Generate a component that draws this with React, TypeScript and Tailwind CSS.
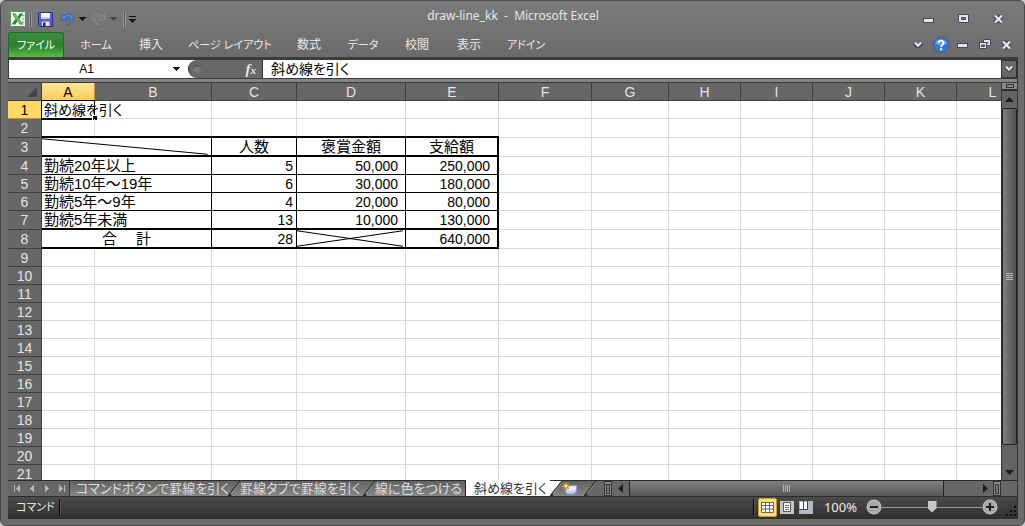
import React, { useState } from 'react';
import clsx from 'clsx';

type Cell = {
  text?: string;
  span?: number;
  className?: string;
  cross?: 'single' | 'double';
};

const COLUMNS = [
  { name: 'A', width: 'w-[53px]' },
  { name: 'B', width: 'w-[117px]' },
  { name: 'C', width: 'w-[85px]' },
  { name: 'D', width: 'w-[109px]' },
  { name: 'E', width: 'w-[93px]' },
  { name: 'F', width: 'w-[93px]' },
  { name: 'G', width: 'w-[77px]' },
  { name: 'H', width: 'w-[72px]' },
  { name: 'I', width: 'w-[72px]' },
  { name: 'J', width: 'w-[72px]' },
  { name: 'K', width: 'w-[72px]' },
  { name: 'L', width: 'w-[72px]' },
];

const LABEL = 'pl-0.5 text-left text-[15px]';
const HEAD = 'text-center text-[15px]';
const COUNT = 'pr-[3px] text-right text-[14px]';
const MONEY = 'pr-[7px] text-right text-[14px]';

const DATA: Record<number, Cell[]> = {
  3: [
    { span: 2, cross: 'single' },
    { text: '人数', className: HEAD },
    { text: '褒賞金額', className: HEAD },
    { text: '支給額', className: HEAD },
  ],
  4: [
    { text: '勤続20年以上', span: 2, className: LABEL },
    { text: '5', className: COUNT },
    { text: '50,000', className: MONEY },
    { text: '250,000', className: MONEY },
  ],
  5: [
    { text: '勤続10年～19年', span: 2, className: LABEL },
    { text: '6', className: COUNT },
    { text: '30,000', className: MONEY },
    { text: '180,000', className: MONEY },
  ],
  6: [
    { text: '勤続5年～9年', span: 2, className: LABEL },
    { text: '4', className: COUNT },
    { text: '20,000', className: MONEY },
    { text: '80,000', className: MONEY },
  ],
  7: [
    { text: '勤続5年未満', span: 2, className: LABEL },
    { text: '13', className: COUNT },
    { text: '10,000', className: MONEY },
    { text: '130,000', className: MONEY },
  ],
  8: [
    { text: '合　 計', span: 2, className: HEAD },
    { text: '28', className: COUNT },
    { cross: 'double' },
    { text: '640,000', className: MONEY },
  ],
};

const TALL_ROWS = [2, 3, 7, 8];
const THICK_ROWS = [3, 7, 8];

const RIBBON_TABS = [
  { name: 'ホーム', width: 'w-16 text-[11px]' },
  { name: '挿入', width: 'w-[46px]' },
  { name: 'ページ レイアウト', width: 'w-28 text-[11px]' },
  { name: '数式', width: 'w-[46px]' },
  { name: 'データ', width: 'w-[62px] text-[11px]' },
  { name: '校閲', width: 'w-[46px]' },
  { name: '表示', width: 'w-[58px]' },
  { name: 'アドイン', width: 'w-14 text-[11px]' },
];

const Caret = ({ color = '#151515' }: { color?: string }) => (
  <svg width="7" height="4" viewBox="0 0 7 4" shapeRendering="crispEdges">
    <path d="M0 0h7L3.5 4z" fill={color} />
  </svg>
);

const ExcelLogo = () => (
  <svg width="16" height="16" viewBox="0 0 16 16">
    <rect x=".5" y=".5" width="15" height="15" rx="1" fill="#f6fbf4" stroke="#4c9a52" />
    <path d="M11.500 1.500h3v13h-3z" fill="#d9ecd5" />
    <path d="M12 4.500h2.500M12 8h2.500M12 11.500h2.500" stroke="#79b578" />
    <path d="M2 2.500h3.600l2 3.400 2-3.400H13L9.300 8l3.900 5.500H9.600L7.400 10.200 5.200 13.500H1.600L5.600 8z" fill="#2c8434" />
    <path d="M3.300 3.200h1.900l6.400 9.600H9.700z" fill="#8cc66d" />
  </svg>
);

const SaveIcon = () => (
  <svg width="15" height="15" viewBox="0 0 15 15">
    <path d="M.5 1.500q0-1 1-1h12q1 0 1 1v13H2L.5 13z" fill="#5a5ed0" stroke="#2b2f8c" />
    <path d="M3 1h9v6H3z" fill="#f4f6ff" />
    <path d="M3 5h9v2H3z" fill="#c3ccee" />
    <path d="M4 9.500h7.500V14H4z" fill="#e2e5f5" />
    <path d="M5 10.500h2.500V14H5z" fill="#22265e" />
  </svg>
);

const UndoIcon = ({ color, edge, flip }: { color: string; edge: string; flip?: boolean }) => (
  <svg width="13" height="13" viewBox="0 0 13 13">
    <g transform={flip ? 'matrix(-1 0 0 1 13 0)' : undefined}>
      <path d="M.5 1v6h6L4.600 5.200C6 3.300 9.200 3.200 9.600 5.800c.3 2.300-1.400 4.300-3.600 6.200 4-1.300 6.500-4 6.400-7C12.200.6 6.300-.8 2.700 3.200z" fill={color} stroke={edge} strokeWidth=".8" />
    </g>
  </svg>
);

const MinimizeIcon = () => (
  <svg width="12" height="6" viewBox="0 0 12 6">
    <rect x=".5" y=".5" width="10" height="4" fill="#e4e4e4" stroke="#45485c" />
  </svg>
);

const MaximizeIcon = () => (
  <svg width="12" height="10" viewBox="0 0 12 10">
    <path d="M.5.5h10v8H.5z" fill="#e4e4e4" stroke="#45485c" />
    <path d="M3.500 3.500h4v2h-4z" fill="#777" stroke="#45485c" />
  </svg>
);

const CloseIcon = () => (
  <svg width="12" height="10" viewBox="0 0 12 10">
    <path d="M2 1.500l7 7M9 1.500l-7 7" stroke="#45485c" strokeWidth="4.400" />
    <path d="M2 1.500l7 7M9 1.500l-7 7" stroke="#e6e6e6" strokeWidth="2.300" />
  </svg>
);

const RestoreIcon = () => (
  <svg width="12" height="11" viewBox="0 0 12 11">
    <path d="M4.500.5h7v6h-7z" fill="#e4e4e4" stroke="#45485c" />
    <path d="M6.500 3h3v1.500h-3z" fill="#666" />
    <path d="M.5 3.500h7v6h-7z" fill="#e4e4e4" stroke="#45485c" />
    <path d="M2.500 6h3v1.500h-3z" fill="#777" stroke="#45485c" />
  </svg>
);

const Chevron = () => (
  <svg width="10" height="8" viewBox="0 0 10 8">
    <path d="M1.500 2L5 5.300 8.500 2" fill="none" stroke="#444759" strokeWidth="3.800" />
    <path d="M2 1.500L5 4.800 8 1.500" fill="none" stroke="#ececec" strokeWidth="2" />
  </svg>
);

const HelpIcon = () => (
  <svg width="16" height="16" viewBox="0 0 16 16">
    <circle cx="8" cy="8" r="7.500" fill="#3976d2" stroke="#2e62b4" />
    <path d="M2 6.500C3 1 13 1 14 6.500 11 8.500 5 8.500 2 6.500z" fill="#669be6" />
    <path d="M5.500 6.200C5.500 2.800 10.500 2.800 10.500 6c0 1.800-2.400 2-2.400 4" fill="none" stroke="#fff" strokeWidth="1.900" />
    <path d="M7 11.300h2.200v2H7z" fill="#fff" />
  </svg>
);

const NavIcon = ({ flip, bar }: { flip?: boolean; bar?: boolean }) => (
  <svg width="8" height="7" viewBox="0 0 8 7" shapeRendering="crispEdges">
    <g transform={flip ? 'matrix(-1 0 0 1 8 0)' : undefined} fill="#b4b4b4">
      <path d="M6 0v7L2 3.500z" />
      {bar && <path d="M0 0h1v7H0z" />}
    </g>
  </svg>
);

const Slant = ({ left, right }: { left: string; right: string }) => (
  <svg className="h-full w-3 shrink-0" viewBox="0 0 12 16" preserveAspectRatio="none">
    <defs>
      <linearGradient id="tabfill" x1="0" y1="0" x2="0" y2="1">
        <stop offset="0" stopColor="#626262" />
        <stop offset="1" stopColor="#868686" />
      </linearGradient>
    </defs>
    <path d="M0 0h12v16H0z" fill={right} />
    <path d="M0 0h12L2 13 0 16z" fill={left} />
    <path d="M12 0L2 13L0 16h3L2 13z" fill="#2c2c2c" stroke="#2c2c2c" />
    <path d="M12 1.500L3 13.500" stroke="#a5a5a5" strokeWidth=".7" />
  </svg>
);

const NewSheetIcon = () => (
  <svg width="16" height="13" viewBox="0 0 16 13">
    <path d="M3.500 3.500h11v6l-2 1.500v1h-7l-2-2z" fill="#c3d4f0" stroke="#8aa1cc" />
    <path d="M5 4.500h8.500v3L7 9z" fill="#eef3fc" />
    <path d="M4 0v8M0 4h8M1.200 1.200l5.600 5.600M6.800 1.200L1.200 6.800" stroke="#e08a1a" strokeWidth="1.300" />
    <circle cx="4" cy="4" r="1.500" fill="#fff3c2" />
  </svg>
);

const Splitter = () => (
  <div className="flex w-2 shrink-0 items-center justify-center border border-[#333] bg-[#8a8a8a]">
    <div className="h-2.5 w-1 border border-[#333] bg-[#777]" />
  </div>
);

const TitleBar = () => (
  <header className="relative flex h-8 shrink-0 items-center justify-between pt-1.5 pr-2.5 pl-0.5">
    <div className="flex items-center">
      <ExcelLogo />
      <div className="ml-[3px] h-[15px] w-[3px] border-x border-[#999] bg-[#555]" />
      <button aria-label="上書き保存" className="ml-1.5">
        <SaveIcon />
      </button>
      <button aria-label="元に戻す" className="ml-2 flex items-center gap-[5px]">
        <UndoIcon color="#4b8ae0" edge="#2b5aa8" />
        <Caret />
      </button>
      <button aria-label="やり直し" className="ml-1.5 flex items-center gap-[5px]">
        <UndoIcon color="#7a7a7a" edge="#919191" flip />
        <Caret color="#454545" />
      </button>
      <div className="ml-1.5 h-[15px] w-[3px] border-x border-[#999] bg-[#555]" />
      <button aria-label="クイック アクセス ツール バーのカスタマイズ" className="ml-[3px] flex flex-col gap-0.5">
        <span className="h-px w-[7px] bg-[#151515]" />
        <Caret />
      </button>
    </div>
    <h1 className="pointer-events-none absolute inset-x-0 top-2 text-center font-['Noto_Sans',sans-serif] text-[12px] leading-4 whitespace-pre text-[#e6e6e6]">
      {'draw-line_kk  -  Microsoft Excel'}
    </h1>
    <div className="flex items-center gap-[23px] pr-[3px]">
      <button aria-label="最小化" className="pt-1"><MinimizeIcon /></button>
      <button aria-label="最大化"><MaximizeIcon /></button>
      <button aria-label="閉じる"><CloseIcon /></button>
    </div>
  </header>
);

const Ribbon = () => (
  <nav className="flex h-[25px] shrink-0 items-stretch justify-between text-[12px] leading-4 text-[#e8e8e8] [font-feature-settings:'palt']">
    <div className="flex">
      <button className="w-14 rounded-t-[3px] border border-b-0 border-[#1f6b28] bg-linear-to-b from-[#3a8f3d] via-[#2a8230] to-[#5bb945] text-[11px] text-white">
        ファイル
      </button>
      {RIBBON_TABS.map((tab) => (
        <button key={tab.name} className={clsx('whitespace-nowrap', tab.width)}>
          {tab.name}
        </button>
      ))}
    </div>
    <div className="flex items-center gap-2.5 pr-[5px]">
      <button aria-label="リボンの最小化"><Chevron /></button>
      <button aria-label="ヘルプ" className="-mr-0.5"><HelpIcon /></button>
      <button aria-label="ウィンドウの最小化" className="pt-0.5"><MinimizeIcon /></button>
      <button aria-label="ウィンドウを元に戻す"><RestoreIcon /></button>
      <button aria-label="ウィンドウを閉じる"><CloseIcon /></button>
    </div>
  </nav>
);

const FormulaBar = ({ value, onChange }: { value: string; onChange: (v: string) => void }) => (
  <div className="flex h-[22px] shrink-0 border-t-[3px] border-b border-l border-[#3c3c3c] bg-white text-black">
    <input
      aria-label="名前ボックス"
      defaultValue="A1"
      className="w-[155px] text-center text-[12px] leading-4 outline-none"
    />
    <button aria-label="名前の一覧" className="flex w-6 items-center justify-center">
      <Caret />
    </button>
    <div className="flex w-[75px] items-center justify-between rounded-l-full border-r border-l border-[#333] bg-[#686868] pr-1.5 pl-1">
      <span className="size-2 rounded-full border-t border-[#444] bg-[#777]" />
      <button aria-label="関数の挿入" className="font-['Liberation_Serif',serif] text-[15px] leading-4 font-bold text-[#e6e6e6] italic">
        f<span className="text-[11px]">x</span>
      </button>
    </div>
    <input
      aria-label="数式バー"
      value={value}
      onChange={(e) => onChange(e.target.value)}
      className="min-w-0 flex-1 pl-2 text-[14px] leading-4 outline-none [font-feature-settings:'palt']"
    />
    <button aria-label="数式バーの展開" className="flex w-4 items-center justify-center border border-[#333] bg-[#686868]">
      <Chevron />
    </button>
  </div>
);

const Cross = ({ kind }: { kind: 'single' | 'double' }) => (
  <svg className="absolute inset-0 size-full" viewBox="0 0 100 20" preserveAspectRatio="none">
    <path
      d={kind === 'single' ? 'M0 1L98 19' : 'M0 1L98 19M0 19L98 1'}
      stroke="#000"
      strokeWidth="1"
      vectorEffect="non-scaling-stroke"
    />
  </svg>
);

const Row = ({ n, title }: { n: number; title: string }) => {
  const cells = DATA[n] ?? [];
  const used = cells.reduce((sum, c) => sum + (c.span ?? 1), 0);
  return (
    <tr className={TALL_ROWS.includes(n) ? 'h-[19px]' : 'h-[18px]'}>
      <th
        scope="row"
        className={clsx(
          'border-r border-b p-0 text-center text-[14px] leading-4 font-normal',
          n === 1 ? 'border-[#c98d2c] bg-[#ffd961] text-black' : 'border-[#404040] bg-[#676767] text-[#e4e4e4]',
        )}
      >
        {n}
      </th>
      {cells.map((cell, i) => (
        <td
          key={i}
          colSpan={cell.span}
          className={clsx(
            'relative border-black p-0 leading-4 whitespace-pre',
            THICK_ROWS.includes(n) ? 'border-b-2' : 'border-b',
            i === cells.length - 1 ? 'border-r-2' : 'border-r',
            cell.className,
          )}
        >
          {cell.text}
          {cell.cross && <Cross kind={cell.cross} />}
        </td>
      ))}
      {COLUMNS.slice(used).map((col) => {
        const overTable = n === 2 && 'ABCDE'.includes(col.name);
        const active = n === 1 && col.name === 'A';
        return (
          <td
            key={col.name}
            className={clsx(
              'border-r border-b border-[#dadada] p-0',
              overTable && 'relative',
              active && "relative pl-0.5 text-[14px] leading-4 whitespace-nowrap [font-feature-settings:'palt']",
            )}
          >
            {overTable && <span className="absolute -right-px -bottom-px left-0 h-0.5 bg-black" />}
            {active && (
              <>
                {title}
                <span className="absolute -inset-x-px -top-px -bottom-0.5 border border-b-2 border-black" />
                <span className="absolute -right-[3px] -bottom-0.5 size-[5px] border-t border-l border-white bg-black" />
              </>
            )}
          </td>
        );
      })}
    </tr>
  );
};

const Sheet = ({ title }: { title: string }) => (
  <div className="min-w-0 flex-1 overflow-hidden bg-white text-black">
    <table className="w-[1021px] table-fixed border-separate border-spacing-0">
      <thead>
        <tr className="h-[18px]">
          <th className="w-[34px] border-r border-b border-[#404040] bg-[#676767] p-0">
            <svg className="ml-auto mr-1 block" width="10" height="10" viewBox="0 0 10 10">
              <path d="M10 0v10H0z" fill="#444" />
            </svg>
          </th>
          {COLUMNS.map((col) => (
            <th
              key={col.name}
              scope="col"
              className={clsx(
                'border-r border-b p-0 text-center text-[14px] leading-4 font-normal',
                col.width,
                col.name === 'A'
                  ? 'border-[#c98d2c] bg-linear-to-b from-[#ffe695] to-[#f8cd55] text-black'
                  : 'border-[#404040] bg-[#676767] text-[#e4e4e4]',
              )}
            >
              {col.name}
            </th>
          ))}
        </tr>
      </thead>
      <tbody>
        {Array.from({ length: 21 }, (_, i) => (
          <Row key={i} n={i + 1} title={title} />
        ))}
      </tbody>
    </table>
  </div>
);

const VerticalScroll = () => (
  <div className="flex w-4 shrink-0 flex-col items-stretch border-l border-[#333] bg-[#646464]">
    <div className="flex h-2 items-center justify-center border-b-2 border-[#2c2c2c] bg-[#8a8a8a]">
      <div className="h-1 w-2 border border-[#333]" />
    </div>
    <button aria-label="上へスクロール" className="flex h-[17px] items-center justify-center">
      <svg width="9" height="5" viewBox="0 0 9 5"><path d="M0 5h9L4.500 0z" fill="#1d1d1d" /></svg>
    </button>
    <div className="flex flex-1 flex-col items-center justify-center gap-px rounded-[2px] border border-[#222] bg-linear-to-r from-[#808080] to-[#505050]">
      {[0, 1, 2, 3].map((i) => (
        <span key={i} className="h-px w-[7px] bg-[#b5b5b5]" />
      ))}
    </div>
    <div className="h-[19px]" />
    <button aria-label="下へスクロール" className="flex h-4 items-center justify-center">
      <svg width="9" height="5" viewBox="0 0 9 5"><path d="M0 0h9L4.500 5z" fill="#1d1d1d" /></svg>
    </button>
  </div>
);

const TAB = 'shrink-0 bg-linear-to-b from-[#626262] to-[#868686] text-left whitespace-nowrap text-[#dedede]';

const SheetTabs = () => (
  <div className="flex h-[17px] shrink-0 border-t border-b border-[#2c2c2c] bg-[#676767] text-[13px] leading-[15px] [font-feature-settings:'palt']">
    <div className="flex w-[62px] shrink-0 items-center justify-between border-r border-[#333] pr-1 pl-1.5">
      <button aria-label="最初のシート"><NavIcon bar /></button>
      <button aria-label="前のシート"><NavIcon /></button>
      <button aria-label="次のシート"><NavIcon flip /></button>
      <button aria-label="最後のシート"><NavIcon flip bar /></button>
    </div>
    <button className={clsx(TAB, 'w-[158px] pl-1.5')}>コマンドボタンで罫線を引く</button>
    <Slant left="url(#tabfill)" right="url(#tabfill)" />
    <button className={clsx(TAB, 'w-[123px]')}>罫線タブで罫線を引く</button>
    <Slant left="url(#tabfill)" right="url(#tabfill)" />
    <button className={clsx(TAB, 'w-[91px] border-r border-[#222]')}>線に色をつける</button>
    <button className="-mt-px w-[84px] shrink-0 bg-white pl-2 text-left whitespace-nowrap text-[#333]">斜め線を引く</button>
    <Slant left="#fff" right="url(#tabfill)" />
    <button aria-label="ワークシートの挿入" className="flex w-[22px] shrink-0 items-center bg-linear-to-b from-[#626262] to-[#868686]">
      <NewSheetIcon />
    </button>
    <Slant left="url(#tabfill)" right="#676767" />
    <div className="w-2 shrink-0" />
    <Splitter />
    <button aria-label="左へスクロール" className="flex w-[17px] shrink-0 items-center justify-center">
      <svg width="5" height="9" viewBox="0 0 5 9"><path d="M5 0v9L0 4.500z" fill="#1d1d1d" /></svg>
    </button>
    <div className="flex min-w-0 flex-1 items-center justify-center gap-px border-x border-[#222] bg-linear-to-b from-[#808080] to-[#565656]">
      {[0, 1, 2, 3].map((i) => (
        <span key={i} className="h-[7px] w-px bg-[#b5b5b5]" />
      ))}
    </div>
    <div className="w-[33px] shrink-0" />
    <button aria-label="右へスクロール" className="flex w-4 shrink-0 items-center justify-center">
      <svg width="5" height="9" viewBox="0 0 5 9"><path d="M0 0v9l5-4.500z" fill="#1d1d1d" /></svg>
    </button>
    <Splitter />
    <div className="w-4 shrink-0" />
  </div>
);

const ZoomButton = ({ plus }: { plus?: boolean }) => (
  <button aria-label={plus ? '拡大' : '縮小'}>
    <svg width="16" height="16" viewBox="0 0 16 16">
      <circle cx="8" cy="8" r="7" fill="#a8a8a8" stroke="#cfcfcf" />
      <path d="M4 8h8" stroke="#222" strokeWidth="2" />
      {plus && <path d="M8 4v8" stroke="#222" strokeWidth="2" />}
    </svg>
  </button>
);

const StatusBar = () => {
  const [zoom, setZoom] = useState(50);
  return (
    <footer className="flex h-[22px] shrink-0 items-center bg-linear-to-b from-[#4b4b4b] to-[#2f2f2f] pb-0.5 text-[#ececec]">
      <span className="w-[51px] pl-2 text-[11px] leading-4 whitespace-nowrap [font-feature-settings:'palt']">コマンド</span>
      <span className="h-4 w-0.5 border-l border-black bg-[#555]" />
      <span className="flex-1" />
      <span className="h-4 w-0.5 border-l border-black bg-[#555]" />
      <button aria-label="標準" className="ml-[3px] flex size-[19px] items-center justify-center rounded-[2px] border border-[#c99a2e] bg-[#ffe07a]">
        <svg width="13" height="11" viewBox="0 0 13 11">
          <path d="M.5.5h12v10H.5zM.5 3.500h12M.5 7h12M4.500.5v10M8.500.5v10" fill="#fff" stroke="#666" />
        </svg>
      </button>
      <button aria-label="ページ レイアウト" className="ml-[3px]">
        <svg width="14" height="13" viewBox="0 0 14 13">
          <path d="M0 0h14v13H0z" fill="#c2c5ca" />
          <path d="M3.500 1.500h7v9h-7z" fill="#f4f4f4" stroke="#555" />
          <path d="M5 4.500h4M5 6.500h4M5 8.500h4" stroke="#777" />
        </svg>
      </button>
      <button aria-label="改ページ プレビュー" className="ml-[5px]">
        <svg width="14" height="13" viewBox="0 0 14 13">
          <path d="M0 0h14v13H0z" fill="#b4b8c0" />
          <path d="M1 1h3v7H1zM5 1h3v7H5z" fill="#fff" />
          <path d="M4.500 0v8M8.500 0v8.500H0" fill="none" stroke="#444" />
        </svg>
      </button>
      <button className="w-[53px] pl-0.5 text-center font-['Noto_Sans',sans-serif] text-[13px] leading-4">100%</button>
      <ZoomButton />
      <input
        type="range"
        aria-label="ズーム"
        value={zoom}
        onChange={(e) => setZoom(Number(e.target.value))}
        className="h-4 w-[100px] appearance-none bg-transparent [&::-webkit-slider-runnable-track]:h-px [&::-webkit-slider-runnable-track]:bg-[#999] [&::-webkit-slider-thumb]:-mt-1.5 [&::-webkit-slider-thumb]:h-3 [&::-webkit-slider-thumb]:w-[9px] [&::-webkit-slider-thumb]:appearance-none [&::-webkit-slider-thumb]:bg-[#c8c8c8] [&::-webkit-slider-thumb]:[clip-path:polygon(0_0,100%_0,100%_65%,50%_100%,0_65%)]"
      />
      <ZoomButton plus />
      <svg className="ml-[7px] self-end" width="12" height="12" viewBox="0 0 12 12">
        <path d="M9 1h2v2H9zM9 5h2v2H9zM5 5h2v2H5zM9 9h2v2H9zM5 9h2v2H5zM1 9h2v2H1z" fill="#111" />
      </svg>
    </footer>
  );
};

const App: React.FC = () => {
  const [title, setTitle] = useState('斜め線を引く');

  return (
    <div className="h-screen bg-[#c4cad2] font-['Liberation_Sans','Noto_Sans_CJK_JP',sans-serif]">
      <div className="flex h-full flex-col overflow-hidden rounded-[6px] border border-[#4a4a4a] bg-linear-to-b from-[#7b7b7b] via-[#6c6c6c] via-10% to-[#6c6c6c] pr-1.5 pb-1.5 pl-[7px]">
        <div className="-mt-px flex shrink-0 flex-col">
          <TitleBar />
          <Ribbon />
        </div>
        <main className="flex min-h-0 flex-1 flex-col border-r border-[#333]">
          <FormulaBar value={title} onChange={setTitle} />
          <div className="h-1 shrink-0 border-b border-[#3a3a3a] bg-[#858585]" />
          <div className="flex min-h-0 flex-1">
            <Sheet title={title} />
            <VerticalScroll />
          </div>
          <SheetTabs />
          <StatusBar />
        </main>
      </div>
    </div>
  );
};

export default App;
